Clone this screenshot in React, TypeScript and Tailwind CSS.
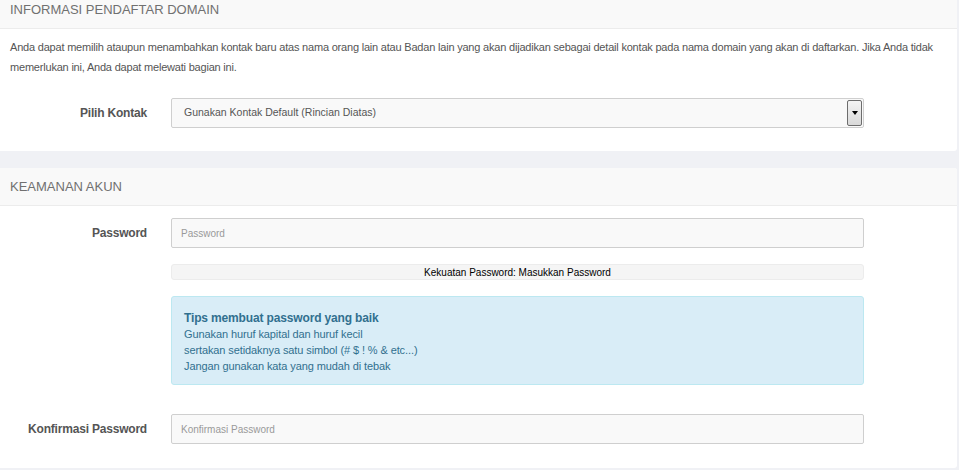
import React from 'react'

const font = { fontFamily: '"Liberation Sans", Arial, sans-serif' }

function PanelHeader({ title }: { title: string }) {
  return (
    <div className="h-[38px] flex items-center px-[10px] bg-[#f9f9f9] border-b border-[#ececec] rounded-tr-[3px]">
      <span className="text-[13px] text-[#707070] uppercase">{title}</span>
    </div>
  )
}

function Row({ label, children }: { label: string; children: React.ReactNode }) {
  return (
    <div className="flex items-center">
      <div className="w-[147px] shrink-0 text-right text-[12px] font-bold text-[#555] tracking-[-0.2px]">{label}</div>
      <div className="ml-[24px] w-[693px]">{children}</div>
    </div>
  )
}

function TextInput({ placeholder }: { placeholder: string }) {
  return (
    <input
      type="password"
      placeholder={placeholder}
      className="block w-full h-[30px] px-[9px] text-[10px] bg-[#f9f9f9] border border-[#cfcfcf] rounded-[2px] placeholder:text-[#999] outline-none"
      style={font}
    />
  )
}

export default function App() {
  return (
    <div className="w-[959px] h-[470px] overflow-hidden bg-[#f0f1f5] pr-[2px]" style={font}>
      <div className="-mt-[9px] bg-white rounded-r-[3px] pb-[23px]">
        <PanelHeader title="Informasi Pendaftar Domain" />
        <div className="px-[10px] pt-[8px] text-[11px] leading-[20px] text-[#555] tracking-[-0.2px]">
          <p>
            <span className="whitespace-nowrap">
              Anda dapat memilih ataupun menambahkan kontak baru atas nama orang lain atau Badan lain yang akan dijadikan sebagai detail kontak pada nama domain yang akan di daftarkan. Jika Anda tidak
            </span>
            <br />
            memerlukan ini, Anda dapat melewati bagian ini.
          </p>
        </div>
        <div className="mt-[21px]">
          <Row label="Pilih Kontak">
            <div className="flex h-[30px] items-center bg-[#f9f9f9] border border-[#cfcfcf] rounded-[2px] pl-[12px] pr-[1px]">
              <span className="flex-1 text-[10.5px] text-[#555]">Gunakan Kontak Default (Rincian Diatas)</span>
              <div className="w-[15px] h-[26px] flex items-center justify-center border border-[#6d6d6d] rounded-[2px] bg-gradient-to-b from-[#f4f4f4] to-[#d9d9d9]">
                <div className="w-0 h-0 border-l-[3.5px] border-r-[3.5px] border-t-[4px] border-l-transparent border-r-transparent border-t-black" />
              </div>
            </div>
          </Row>
        </div>
      </div>

      <div className="mt-[17px] bg-white rounded-r-[3px] pb-[24px]">
        <PanelHeader title="Keamanan Akun" />
        <div className="pt-[12px]">
          <Row label="Password">
            <TextInput placeholder="Password" />
          </Row>
          <Row label="">
            <div className="mt-[16px] h-[16px] flex items-center justify-center bg-[#f5f5f5] border border-[#ececec] rounded-[3px] text-[10px] text-black">
              Kekuatan Password: Masukkan Password
            </div>
          </Row>
          <Row label="">
            <div className="mt-[16px] h-[89px] bg-[#d9edf7] border border-[#bce8f1] rounded-[3px] px-[12px] pt-[13px] text-[11px] leading-[16px] text-[#31708f] tracking-[-0.1px]">
              <div className="font-bold text-[12px] tracking-[-0.15px]">Tips membuat password yang baik</div>
              <div>Gunakan huruf kapital dan huruf kecil</div>
              <div>sertakan setidaknya satu simbol (# $ ! % &amp; etc...)</div>
              <div>Jangan gunakan kata yang mudah di tebak</div>
            </div>
          </Row>
          <div className="mt-[29px]">
            <Row label="Konfirmasi Password">
              <TextInput placeholder="Konfirmasi Password" />
            </Row>
          </div>
        </div>
      </div>
    </div>
  )
}
